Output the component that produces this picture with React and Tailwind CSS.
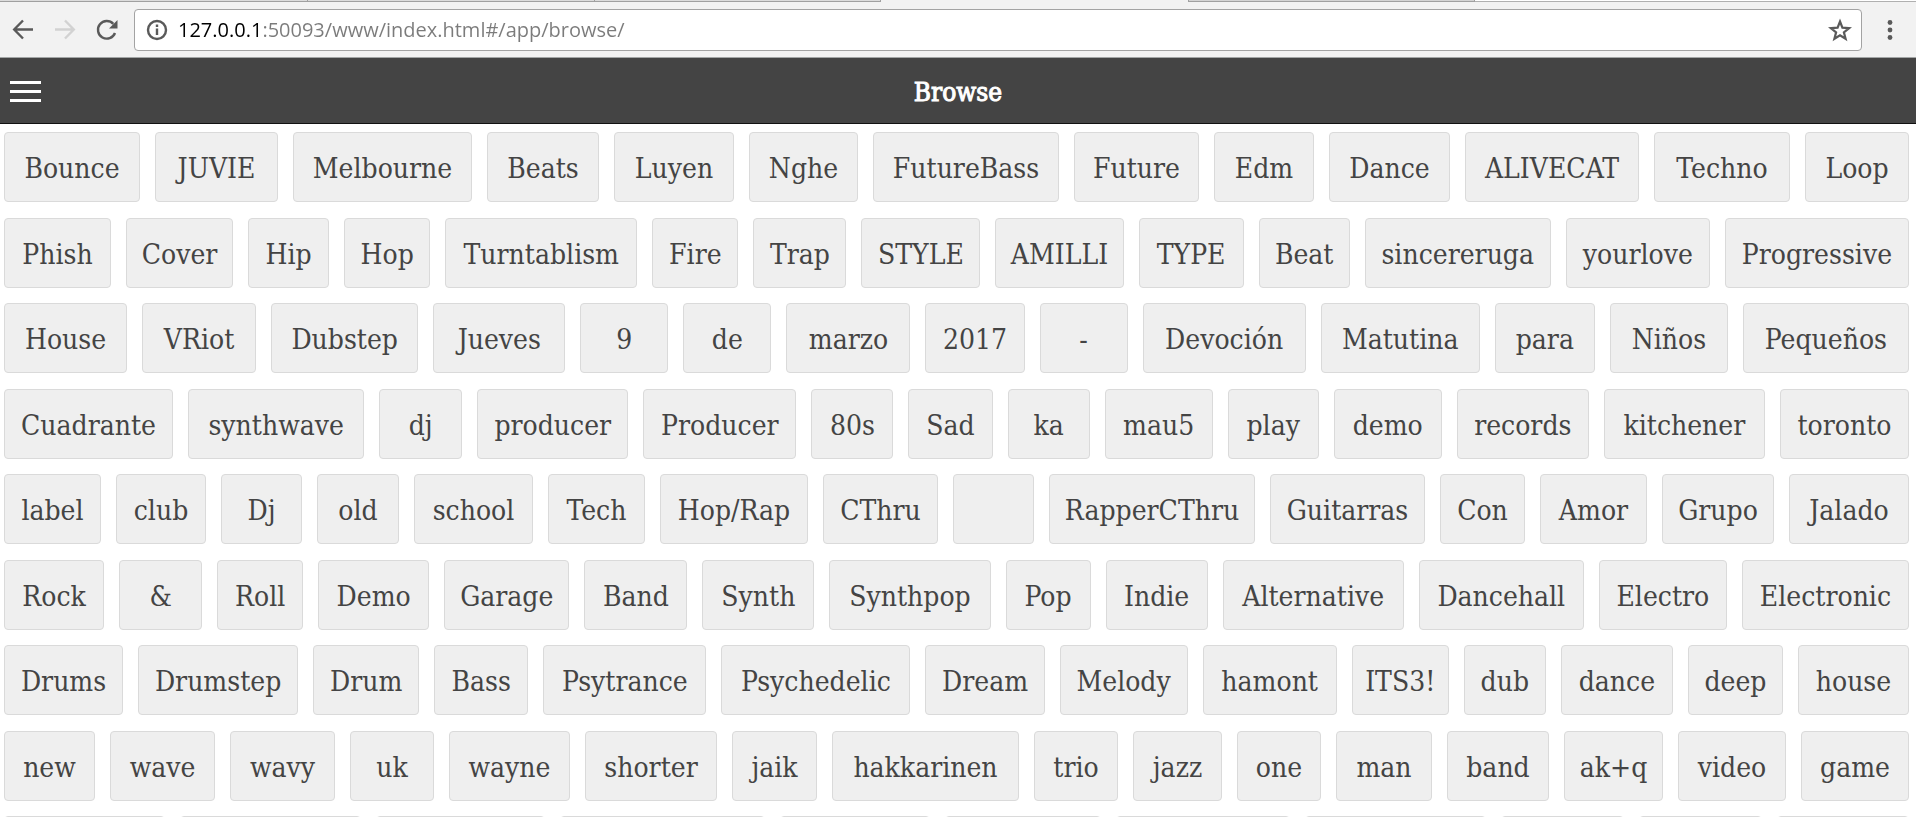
const rows = [
  [["Bounce", 136], ["JUVIE", 123], ["Melbourne", 179], ["Beats", 112], ["Luyen", 120], ["Nghe", 109], ["FutureBass", 186], ["Future", 125], ["Edm", 100], ["Dance", 121], ["ALIVECAT", 174], ["Techno", 136], ["Loop", 104]],
  [["Phish", 107], ["Cover", 107], ["Hip", 81], ["Hop", 86], ["Turntablism", 192], ["Fire", 86], ["Trap", 93], ["STYLE", 119], ["AMILLI", 128], ["TYPE", 105], ["Beat", 91], ["sincereruga", 186], ["yourlove", 144], ["Progressive", 184]],
  [["House", 123], ["VRiot", 114], ["Dubstep", 147], ["Jueves", 132], ["9", 88], ["de", 88], ["marzo", 124], ["2017", 99], ["-", 88], ["Devoción", 163], ["Matutina", 159], ["para", 100], ["Niños", 118], ["Pequeños", 166]],
  [["Cuadrante", 169], ["synthwave", 176], ["dj", 83], ["producer", 151], ["Producer", 153], ["80s", 82], ["Sad", 84], ["ka", 82], ["mau5", 108], ["play", 91], ["demo", 108], ["records", 132], ["kitchener", 161], ["toronto", 129]],
  [["label", 97], ["club", 90], ["Dj", 81], ["old", 82], ["school", 119], ["Tech", 97], ["Hop/Rap", 148], ["CThru", 115], ["", 81], ["RapperCThru", 206], ["Guitarras", 155], ["Con", 85], ["Amor", 107], ["Grupo", 112], ["Jalado", 120]],
  [["Rock", 100], ["&", 83], ["Roll", 86], ["Demo", 111], ["Garage", 125], ["Band", 103], ["Synth", 112], ["Synthpop", 161], ["Pop", 85], ["Indie", 102], ["Alternative", 181], ["Dancehall", 165], ["Electro", 128], ["Electronic", 167]],
  [["Drums", 119], ["Drumstep", 160], ["Drum", 106], ["Bass", 94], ["Psytrance", 163], ["Psychedelic", 189], ["Dream", 119], ["Melody", 128], ["hamont", 134], ["ITS3!", 97], ["dub", 82], ["dance", 112], ["deep", 95], ["house", 111]],
  [["new", 91], ["wave", 105], ["wavy", 105], ["uk", 84], ["wayne", 121], ["shorter", 132], ["jaik", 85], ["hakkarinen", 187], ["trio", 84], ["jazz", 89], ["one", 84], ["man", 96], ["band", 102], ["ak+q", 99], ["video", 108], ["game", 108]],
  [["", 161], ["", 181], ["", 169], ["", 205], ["", 150], ["", 156], ["", 174], ["", 181], ["", 123], ["", 123], ["", 132]],
];

// Both side borders are drawn before the free space of a row is shared out.
const BORDERS = 2;

function Icon({ children, className = "text-[#5a5a5a]" }) {
  return (
    <svg viewBox="0 0 24 24" className={`block size-6 ${className}`} fill="none" stroke="currentColor" strokeWidth="2.4" aria-hidden="true">
      {children}
    </svg>
  );
}

function TabStrip() {
  return (
    <div className="flex h-[2px]">
      <div className="w-[16%] border-b border-[#a0a0a0] bg-[#dcdcdc]" />
      <div className="w-[15%] border-b border-l border-[#a0a0a0] bg-[#dcdcdc]" />
      <div className="w-[15%] border-x border-b border-[#a0a0a0] bg-[#dcdcdc]" />
      <div className="w-[16%] bg-[#f2f2f2]" />
      <div className="w-[15%] border-x border-b border-[#a0a0a0] bg-[#d4d4d4]" />
      <div className="flex-1 border-b border-[#b0b0b0] bg-white" />
    </div>
  );
}

function Toolbar() {
  return (
    <nav className="flex h-14 shrink-0 items-center border-b border-[#a3a6a6] bg-[#f2f2f2] pr-[14px] pl-[11px]" aria-label="Browser">
      <div className="flex gap-[18px]">
        <button type="button" aria-label="Back">
          <Icon>
            <path d="M22 11.500H4M12 2.500L3.200 11.500 12 20.500" />
          </Icon>
        </button>
        <button type="button" aria-label="Forward" disabled>
          <Icon className="text-[#d2d2d2]">
            <path d="M2 11.500H20M12 2.500l8.800 9L12 20.500" />
          </Icon>
        </button>
        <button type="button" aria-label="Reload">
          <Icon>
            <path d="M20 15A8.800 8.800 0 1 1 18.300 5.900" />
            <path d="M22.500 2v8.500H14z" fill="currentColor" stroke="none" />
          </Icon>
        </button>
      </div>
      <div className="mr-4 ml-[15px] flex h-[42px] flex-1 items-center rounded border border-[#a3a3a3] bg-white pr-[9px] pl-[10px]">
        <button type="button" aria-label="Site information">
          <Icon>
            <circle cx="12" cy="12" r="9" />
            <path d="M12 10.500v6.500M12 6.500v2.400" />
          </Icon>
        </button>
        <input
          type="text"
          aria-label="Address"
          defaultValue="127.0.0.1:50093/www/index.html#/app/browse/"
          className="ml-[9px] min-w-0 flex-1 bg-[linear-gradient(to_right,#000000_80px,#7b7b7b_80px)] bg-clip-text font-['Open_Sans','Noto_Sans',sans-serif] text-[20px] leading-8 text-transparent outline-none"
        />
        <button type="button" aria-label="Bookmark">
          <Icon>
            <path d="M12 3.500l2.400 6.200 6.700.4-5.200 4.200 1.700 6.500L12 17.200l-5.600 3.600 1.700-6.500-5.200-4.200 6.700-.4z" strokeWidth="2.2" />
          </Icon>
        </button>
      </div>
      <button type="button" aria-label="Menu">
        <Icon>
          <g fill="currentColor" stroke="none">
            <circle cx="12" cy="4.500" r="2.400" />
            <circle cx="12" cy="12" r="2.400" />
            <circle cx="12" cy="19.500" r="2.400" />
          </g>
        </Icon>
      </button>
    </nav>
  );
}

export default function App() {
  return (
    <div className="flex h-screen flex-col overflow-hidden bg-white font-['DejaVu_Serif_Condensed','DejaVu_Serif',serif]">
      <TabStrip />
      <Toolbar />
      <header className="grid h-[66px] shrink-0 grid-cols-[1fr_auto_1fr] items-center border-b border-[#111111] bg-[#444444] px-[10px] pt-[2px]">
        <button type="button" aria-label="Open navigation" className="flex w-[31px] flex-col gap-[6px]">
          <span className="h-[3px] bg-white" />
          <span className="h-[3px] bg-white" />
          <span className="h-[3px] bg-white" />
        </button>
        <h1 className="text-[26px] leading-8 font-normal text-white [-webkit-text-stroke:1px_#ffffff]">Browse</h1>
      </header>
      <main className="min-h-0 flex-1 overflow-hidden pt-2 pr-[7px] pl-1">
        {rows.map((row, r) => (
          <div key={r} className="flex gap-[15px] odd:mb-4 even:mb-[15px]">
            {row.map(([tag, width], i) => (
              <button
                key={i}
                type="button"
                style={{ flexGrow: width - BORDERS }}
                className="h-[70px] min-w-0 basis-0 rounded border border-[#dadada] bg-[#efefef] pt-[3px] text-center text-[28px] leading-8 whitespace-nowrap text-[#444444]"
              >
                {tag}
              </button>
            ))}
          </div>
        ))}
      </main>
    </div>
  );
}
